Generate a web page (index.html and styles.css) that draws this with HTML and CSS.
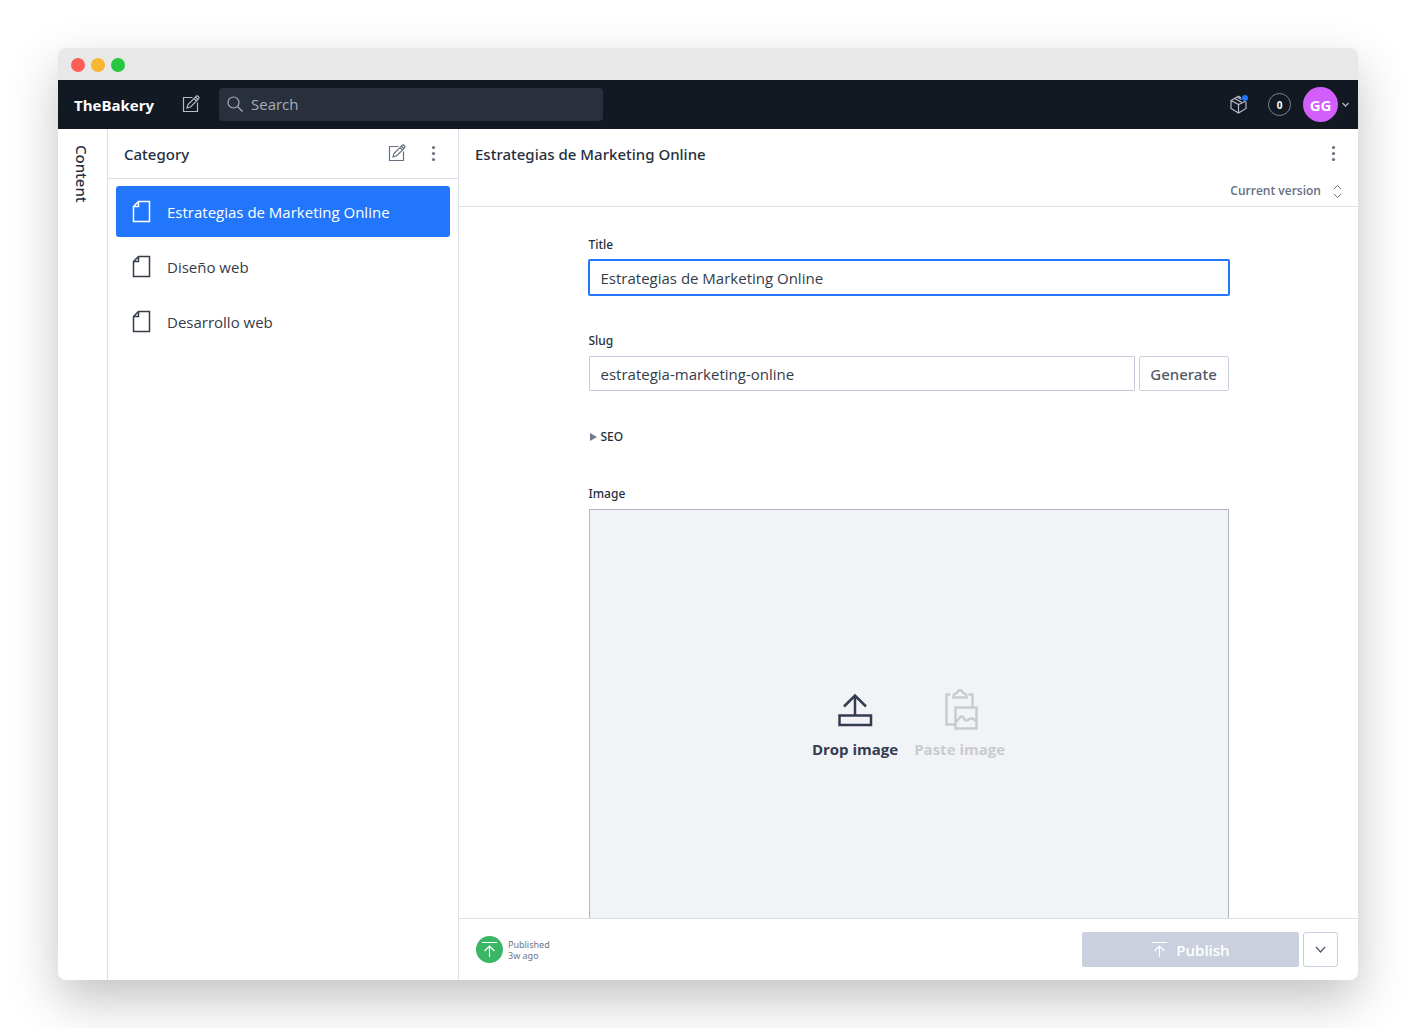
FILE: index.html
```html
<!DOCTYPE html>
<html lang="en">
<head>
<meta charset="utf-8">
<meta name="viewport" content="width=device-width, initial-scale=1">
<title>TheBakery – Estrategias de Marketing Online</title>
<link rel="stylesheet" href="styles.css">
</head>
<body>
<svg class="defs" aria-hidden="true">
  <symbol id="compose" viewBox="0 0 25 25"><path d="M14.500 5.500H5.500V19.500H19.500V10.500M9 16L10 12.500L17.500 5L20 7.500L12.500 15ZM16 6.500L18.500 9M17.500 5L18.500 4C19.500 3.200 21.700 5.300 20.800 6.300L20 7.500"/></symbol>
  <symbol id="page" viewBox="0 0 25 25"><path d="M4.500 7.500L9.500 2.500H20.500V22.500H4.500ZM4.500 7.500H9.500V2.500"/></symbol>
  <symbol id="publish" viewBox="0 0 25 25"><path d="M5 5.500H20M12.500 20V9M7.500 14L12.500 9L17.500 14"/></symbol>
  <symbol id="dots" viewBox="0 0 25 25"><circle cx="12.500" cy="6.500" r="1.600"/><circle cx="12.500" cy="12.500" r="1.600"/><circle cx="12.500" cy="18.500" r="1.600"/></symbol>
</svg>
<div class="window">
  <div class="titlebar"><span class="light red"></span><span class="light amber"></span><span class="light green"></span></div>

  <header class="navbar">
    <a class="brand" href="#">TheBakery</a>
    <button class="icon-button compose" aria-label="Create new document"><svg class="icon"><use href="#compose"/></svg></button>
    <label class="search">
      <svg class="icon" viewBox="0 0 25 25"><circle cx="10.500" cy="10.500" r="5.500"/><path d="M14.500 14.500L19.500 19.500"/></svg>
      <input type="search" placeholder="Search" aria-label="Search">
    </label>
    <div class="nav-end">
      <button class="icon-button package" aria-label="Updates">
        <svg class="icon" viewBox="0 0 25 25"><path d="M15 5.700L12.500 4.200L5 8.500V16.500L12.500 21L20 16.500V10M5 8.500L12.500 12.500L20 9M12.500 12.500V21M8.700 6.500L16 10.500M11 5L15.500 7.600"/></svg>
        <span class="dot"></span>
      </button>
      <button class="count" aria-label="Users online">0</button>
      <button class="user" aria-label="Account"><span class="avatar">GG</span><svg class="chevron" viewBox="0 0 9 9"><path d="M1.500 3L4.500 6L7.500 3"/></svg></button>
    </div>
  </header>

  <div class="workspace">
    <nav class="rail" aria-label="Panes"><a href="#">Content</a></nav>

    <section class="pane">
      <header class="pane-head">
        <h2>Category</h2>
        <button class="icon-button" aria-label="Create category"><svg class="icon"><use href="#compose"/></svg></button>
        <button class="icon-button" aria-label="List menu"><svg class="icon solid"><use href="#dots"/></svg></button>
      </header>
      <ul class="list">
        <li><a class="item selected" href="#"><svg class="page-icon"><use href="#page"/></svg>Estrategias de Marketing Online</a></li>
        <li><a class="item" href="#"><svg class="page-icon"><use href="#page"/></svg>Diseño web</a></li>
        <li><a class="item" href="#"><svg class="page-icon"><use href="#page"/></svg>Desarrollo web</a></li>
      </ul>
    </section>

    <main class="editor">
      <header class="editor-head">
        <div class="editor-title">
          <h1>Estrategias de Marketing Online</h1>
          <button class="icon-button" aria-label="Document menu"><svg class="icon solid"><use href="#dots"/></svg></button>
        </div>
        <button class="version">Current version<svg viewBox="0 0 9 15"><path d="M1 5L4.500 1.500L8 5M1 10L4.500 13.500L8 10"/></svg></button>
      </header>

      <div class="scroll">
        <form class="form">
          <div class="field">
            <label for="title">Title</label>
            <input class="text focused" id="title" type="text" value="Estrategias de Marketing Online">
          </div>
          <div class="field">
            <label for="slug">Slug</label>
            <div class="slug-row">
              <input class="text" id="slug" type="text" value="estrategia-marketing-online">
              <button class="generate" type="button">Generate</button>
            </div>
          </div>
          <details class="seo">
            <summary><svg viewBox="0 0 8 8"><path d="M0 0L7 4L0 8Z"/></svg>SEO</summary>
          </details>
          <div class="field">
            <span class="label" id="image-label">Image</span>
            <div class="dropzone" role="group" aria-labelledby="image-label">
              <button type="button" class="drop"><svg viewBox="0 0 50 50"><path d="M9.500 30.500H41V40H9.500ZM25 30V11M14 21.500L25 10.500L36 21.500"/></svg>Drop image</button>
              <button type="button" class="drop" disabled><svg viewBox="0 0 50 50"><path d="M15 9.500H11.500V39.500H19.500M33.500 9.500H37.500V22M20.500 22.500H41.500V43.500H20.500ZM20.500 37C23 36 24.500 31 27 31.500C29 32 29 35.500 31.500 35.500C33 35.500 34 33.500 36.500 33.500C39 33.500 39 35.500 41.500 36M18.500 12.500V11C18.500 8.500 21 8.500 22 7.500C23 6 23.500 5 25 5C26.500 5 27 6 28 7.500C29 8.500 31.500 8.500 31.500 11V12.500Z"/></svg>Paste image</button>
            </div>
          </div>
        </form>
      </div>

      <footer class="editor-foot">
        <button class="status">
          <span class="status-icon"><svg class="icon"><use href="#publish"/></svg></span>
          <span>Published<br>3w ago</span>
        </button>
        <div class="actions">
          <button class="publish" disabled><svg class="icon"><use href="#publish"/></svg>Publish</button>
          <button class="more" aria-label="More actions"><svg viewBox="0 0 11 11"><path d="M1 3L5.500 8L10 3"/></svg></button>
        </div>
      </footer>
    </main>
  </div>
</div>
</body>
</html>
```
FILE: styles.css
```css
* { box-sizing: border-box; }

body {
  margin: 0;
  padding: 48px 58px;
  background: #fff;
  color: #262f3d;
  font: 15px/20px "Open Sans", "Noto Sans", sans-serif;
}

button, input { font: inherit; color: inherit; }
button { padding: 0; border: 0; background: none; }
a { color: inherit; text-decoration: none; }
h1, h2 { margin: 0; font-size: 15px; }
svg { display: block; flex: none; fill: none; stroke: currentColor; }

/* Noto Sans carries the medium weight */
h1, h2, .rail, .generate, .field label, .label, .seo {
  font-family: "Noto Sans", "Open Sans", sans-serif;
  font-weight: 500;
}

.defs { position: absolute; width: 0; height: 0; }
.icon { width: 25px; height: 25px; stroke-width: 1.2; }
.solid { fill: currentColor; stroke: none; }
.icon-button { display: flex; color: #66707f; }

.window {
  display: flex;
  flex-direction: column;
  height: calc(100vh - 96px);
  min-height: 480px;
  overflow: hidden;
  border-radius: 8px;
  background: #fff;
  box-shadow: 0 20px 50px rgba(0, 0, 0, .24);
}

.titlebar {
  display: flex;
  flex: none;
  align-items: center;
  gap: 6px;
  height: 32px;
  padding: 2px 13px 0;
  background: #e8e8e8;
}
.light { width: 14px; height: 14px; border-radius: 50%; }
.red { background: #ff5f56; }
.amber { background: #f7b731; }
.green { background: #27c840; }

.navbar {
  display: flex;
  flex: none;
  align-items: center;
  height: 49px;
  padding: 0 8px 0 16px;
  background: #121923;
  color: #fff;
}
.brand { width: 104px; font-size: 15px; font-weight: 700; }
.navbar .icon-button { color: #b4bac8; }
.search {
  display: flex;
  align-items: center;
  flex: 0 1 384px;
  height: 33px;
  margin-left: 16px;
  padding: 0 4px;
  border-radius: 4px;
  background: #2a303b;
  color: #a6adbb;
}
.search input {
  flex: 1;
  min-width: 0;
  padding: 0 3px 2px;
  border: 0;
  outline: 0;
  background: none;
}
.search input::placeholder { color: inherit; opacity: 1; }
.nav-end { display: flex; align-items: center; margin-left: auto; }
.package { position: relative; }
.dot {
  position: absolute;
  top: 3px;
  right: 3px;
  width: 6px;
  height: 6px;
  border-radius: 50%;
  background: #2276fc;
}
.count {
  width: 23px;
  height: 23px;
  margin: 0 12px 0 17px;
  border: 1px solid #7b8290;
  border-radius: 50%;
  font-size: 10px;
  line-height: 20px;
  font-weight: 700;
}
.user { display: flex; align-items: center; gap: 3px; }
.avatar {
  width: 35px;
  height: 35px;
  border-radius: 50%;
  background: #d25ffc;
  font-weight: 700;
  line-height: 36px;
  text-align: center;
}
.chevron { width: 9px; height: 9px; stroke-width: 1.3; color: #b4bac8; }

.workspace { display: flex; flex: 1; min-height: 0; }
.rail {
  flex: none;
  width: 50px;
  padding: 16px 14px;
  border-right: 1px solid #dce0e9;
}
.rail a { display: block; writing-mode: vertical-rl; }

.pane { flex: 0 0 351px; border-right: 1px solid #dce0e9; }
.pane-head {
  display: flex;
  align-items: center;
  gap: 12px;
  height: 50px;
  padding: 0 12px 0 16px;
  border-bottom: 1px solid #dce0e9;
}
.pane-head h2 { flex: 1; }
.list {
  display: grid;
  gap: 4px;
  margin: 0;
  padding: 7px 8px;
  list-style: none;
}
.item {
  display: flex;
  align-items: center;
  gap: 13px;
  height: 51px;
  padding: 0 13px;
  border-radius: 3px;
  color: #343c4a;
}
.selected { background: #2276fc; color: #fff; }
.page-icon { width: 25px; height: 27px; stroke-width: 1.5; }

.editor { display: flex; flex: 1; flex-direction: column; min-width: 0; }
.editor-head {
  flex: none;
  height: 78px;
  padding: 12px 12px 0 16px;
  border-bottom: 1px solid #dce0e9;
}
.editor-title { display: flex; align-items: center; justify-content: space-between; }
.version {
  display: flex;
  align-items: center;
  gap: 12px;
  margin: 15px 4px 0 auto;
  color: #66707f;
  font-size: 12px;
  font-weight: 600;
}
.version svg { width: 9px; height: 15px; }

.scroll { flex: 1; min-height: 0; overflow: hidden; }
.form {
  display: grid;
  gap: 37px;
  max-width: 672px;
  margin: 0 auto;
  padding: 29px 16px;
}
.field { display: grid; gap: 6px; }
.field label, .label, .seo { font-size: 12px; line-height: 18px; }
.text {
  width: 100%;
  min-width: 0;
  height: 35px;
  padding: 0 11px;
  border: 1px solid #c4cad8;
  border-radius: 1px;
  outline: 0;
  background: #fff;
  color: #343c4a;
}
.focused { border-color: #2276fc; box-shadow: 0 0 0 1px #2276fc; }
.slug-row { display: flex; gap: 4px; }
.generate {
  flex: none;
  width: 90px;
  border: 1px solid #c9cfdc;
  border-radius: 2px;
  color: #515a69;
}
.seo { padding-bottom: 2px; }
.seo summary { display: flex; align-items: center; gap: 3px; padding-left: 1px; list-style: none; }
.seo svg { width: 8px; height: 8px; fill: #727989; stroke: none; }
.dropzone {
  display: flex;
  align-items: center;
  justify-content: center;
  gap: 16px;
  height: 425px;
  border: 1px solid #afb6c7;
  background: #f1f3f7;
}
.drop {
  display: flex;
  flex-direction: column;
  align-items: center;
  gap: 4px;
  color: #343c50;
  font-weight: 700;
}
.drop svg { width: 50px; height: 50px; stroke-width: 2.5; }
.drop:disabled { color: #c8cbd0; }

.editor-foot {
  display: flex;
  flex: none;
  align-items: center;
  justify-content: space-between;
  height: 62px;
  padding: 0 20px 0 17px;
  border-top: 1px solid #dce0e9;
}
.status {
  display: flex;
  align-items: center;
  gap: 5px;
  color: #6e7683;
  font-family: "Noto Sans", "Open Sans", sans-serif;
  font-size: 9px;
  line-height: 11px;
  text-align: left;
}
.status-icon { padding: 1px; border-radius: 50%; background: #3ab667; color: #fff; }
.actions { display: flex; gap: 4px; height: 35px; }
.publish {
  display: flex;
  align-items: center;
  justify-content: center;
  gap: 4px;
  width: 217px;
  padding-right: 4px;
  border-radius: 2px;
  background: #cad0dd;
  color: #fff;
  font-weight: 600;
}
.more {
  display: grid;
  place-items: center;
  width: 35px;
  border: 1px solid #c9cfdc;
  border-radius: 3px;
  color: #515a69;
}
.more svg { width: 11px; height: 11px; stroke-width: 1.3; }
```
